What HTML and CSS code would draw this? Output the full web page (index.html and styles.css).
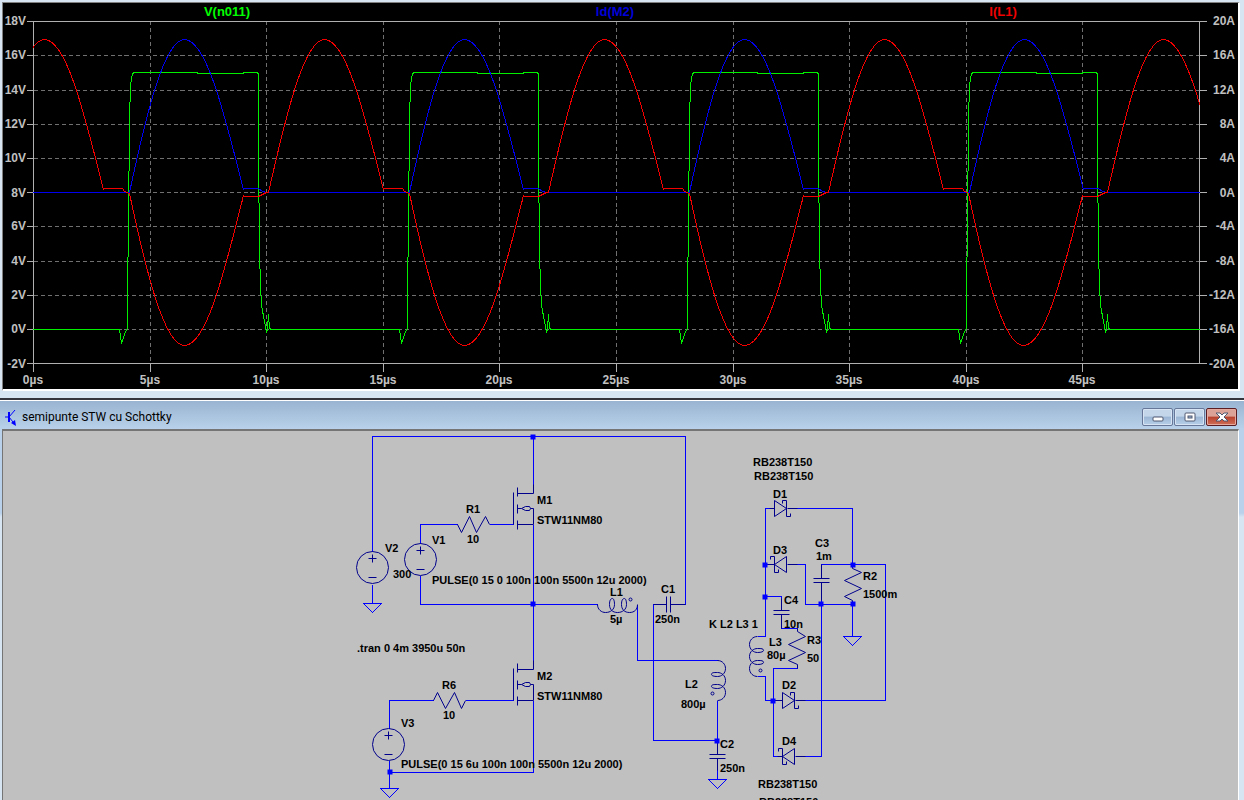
FILE: index.html
```html
<!DOCTYPE html>
<html lang="ro">
<head>
<meta charset="utf-8">
<title>semipunte STW cu Schottky</title>
<link rel="stylesheet" href="styles.css">
</head>
<body>
<section class="plot-window" aria-label="Waveforms">
<svg class="plot" viewBox="3 3 1235 386">
  <defs>
    <clipPath id="area"><rect x="33" y="20" width="1167" height="344"/></clipPath>
    <path id="volts" d="M-10 329H119L121 343L125 331L127 328V290L128 225L129 120L130 85L132 73L134 72H197V73H243V72H257L258 74V190L259 215V250L260 285L261 305L264 321L266 332L267 328L268 314L269 328L271 329H272"/>
    <path id="drain" d="M-12 192H129C146 112 164 39 184 39C206 39 224 114 243 189L244 188H258L262 191L266 192H268"/>
    <path id="coil" d="M129 193C146 273 164 345 184 345C206 345 224 271 243 195L244 196H258L262 194L266 192H268C286 112 304 39 324 39C346 39 364 114 383 189L384 188H399L402 188L404 191L409 193"/>
  </defs>
  <g class="grid" transform="translate(.5 .5)">
    <path d="M33 55H1199M33 90H1199M33 124H1199M33 158H1199M33 192H1199M33 226H1199M33 261H1199M33 295H1199M33 329H1199"/>
    <path d="M150 20V363M266 20V363M383 20V363M499 20V363M616 20V363M733 20V363M849 20V363M966 20V363M1082 20V363"/>
  </g>
  <g class="axes" transform="translate(.5 .5)">
    <path d="M26 21H1206M26 363H1206M33 21V371M1199 21V363"/>
    <path d="M26 55H33M26 90H33M26 124H33M26 158H33M26 192H33M26 226H33M26 261H33M26 295H33M26 329H33"/>
    <path d="M1199 55H1206M1199 90H1206M1199 124H1206M1199 158H1206M1199 192H1206M1199 226H1206M1199 261H1206M1199 295H1206M1199 329H1206"/>
    <path d="M150 363V371M266 363V371M383 363V371M499 363V371M616 363V371M733 363V371M849 363V371M966 363V371M1082 363V371"/>
  </g>
  <g clip-path="url(#area)">
    <g transform="translate(.5 .5)">
      <g class="trace green">
        <use href="#volts"/><use href="#volts" x="280"/><use href="#volts" x="560"/><use href="#volts" x="839"/><path d="M1111 329H1199"/>
      </g>
      <g class="trace blue">
        <use href="#drain"/><use href="#drain" x="280"/><use href="#drain" x="560"/><use href="#drain" x="840"/><path d="M1108 192H1199"/>
      </g>
      <g class="trace red">
        <use href="#coil" x="-280"/><use href="#coil"/><use href="#coil" x="280"/><use href="#coil" x="560"/><use href="#coil" x="839"/>
      </g>
    </g>
  </g>
  <g class="legend">
    <text class="green" x="227" y="16">V(n011)</text>
    <text class="blue" x="615" y="16">Id(M2)</text>
    <text class="red" x="1003" y="16">I(L1)</text>
  </g>
  <g class="ticks end">
    <text x="26" y="25">18V</text><text x="26" y="59">16V</text><text x="26" y="94">14V</text><text x="26" y="128">12V</text><text x="26" y="162">10V</text><text x="26" y="197">8V</text><text x="26" y="230">6V</text><text x="26" y="265">4V</text><text x="26" y="299">2V</text><text x="26" y="333">0V</text><text x="26" y="368">-2V</text>
    <text x="1235" y="25">20A</text><text x="1235" y="59">16A</text><text x="1235" y="94">12A</text><text x="1235" y="128">8A</text><text x="1235" y="162">4A</text><text x="1235" y="197">0A</text><text x="1235" y="230">-4A</text><text x="1235" y="265">-8A</text><text x="1235" y="299">-12A</text><text x="1235" y="333">-16A</text><text x="1235" y="368">-20A</text>
  </g>
  <g class="ticks middle">
    <text x="33" y="384">0µs</text><text x="150" y="384">5µs</text><text x="266" y="384">10µs</text><text x="383" y="384">15µs</text><text x="499" y="384">20µs</text><text x="616" y="384">25µs</text><text x="733" y="384">30µs</text><text x="849" y="384">35µs</text><text x="966" y="384">40µs</text><text x="1082" y="384">45µs</text>
  </g>
</svg>
</section>

<section class="schematic-window" aria-label="Schematic">
<header class="title-bar">
  <svg class="app-icon" width="12" height="17" viewBox="0 0 12 17"><path d="M1 8H5M5 8L11 1M5 8L9 13"/><path class="solid" d="M7 14L11 11L12 17Z"/><path class="bar" d="M5 3V13"/></svg>
  <h1>semipunte STW cu Schottky</h1>
  <div class="controls">
    <button type="button" aria-label="Minimize"><svg width="28" height="15" viewBox="0 0 28 15"><rect class="glyph" x="9" y="7" width="10" height="4" rx="1"/></svg></button>
    <button type="button" aria-label="Maximize"><svg width="28" height="15" viewBox="0 0 28 15"><rect class="glyph" x="9" y="3" width="10" height="8" rx="1"/><rect class="hole" x="12" y="6" width="4" height="2"/></svg></button>
    <button type="button" class="close" aria-label="Close"><svg width="28" height="15" viewBox="0 0 28 15"><path class="glyph" d="M8 3H12L14 5L16 3H20L16 7L20 11H16L14 9L12 11H8L12 7Z"/></svg></button>
  </div>
</header>
<div class="frame">
<div class="sheet">
<svg class="schematic" viewBox="3 431 1235 384">
  <defs>
    <g id="mosfet"><path d="M0 5V37M4 0V9M4 17V26M4 33V42M4 6H20M4 37H20M17 21H20V37M4 21H8L12 19H16L17 21L16 23H12L8 21"/></g>
    <g id="source"><circle r="16"/><path d="M-4 -9H4M0 -13V-5M-4 10H4"/></g>
    <path id="coilv" d="M0 0C5 0 8 4 8 8C8 13 4 16 0 16C-4 16 -6 15 -6 14C-6 12 -4 12 0 12C4 12 8 15 8 20C8 25 4 28 0 28C-4 28 -6 27 -6 26C-6 24 -4 24 0 24C4 24 8 27 8 32C8 37 4 40 0 40"/>
    <path id="schottky" d="M0 -8V8L12 0ZM8 -5V-8H12V8H16V5"/>
    <path id="schottky-left" d="M12 -8V8L0 0ZM-4 -5V-8H0V8H4V5"/>
    <path id="ground" d="M-9 0H9L0 9Z"/>
    <rect id="node" x="-2" y="-2" width="5" height="5"/>
  </defs>
  <g transform="translate(.5 .5)">
    <g class="wires">
      <path d="M372 551V436H685V604H677M533 436V488M420 543V524H457M489 524H513M420 575V604H597M372 584V603"/>
      <path d="M533 524V665M389 728V700H433M465 700H513M389 760V788M389 772H533V700"/>
      <path d="M637 604V660H717M717 700V748M717 740H653V604H662M717 764V779"/>
      <path d="M774 508H765V636H757M787 508H852V564M774 564H765M787 564H805V604H852M821 570V564H885V700H803M821 590V756H803M852 604V636"/>
      <path d="M765 596H781V604M781 622V628H797M797 668H773V756H778M757 676H765V700H778"/>
      <use href="#ground" x="372" y="603"/><use href="#ground" x="389" y="788"/><use href="#ground" x="717" y="779"/><use href="#ground" x="852" y="636"/>
    </g>
    <g class="parts">
      <use href="#mosfet" x="513" y="487"/><use href="#mosfet" x="513" y="663"/>
      <use href="#source" x="372" y="567"/><use href="#source" x="420" y="559"/><use href="#source" x="388" y="744"/>
      <path d="M533 484V493M533 660V669"/>
      <path d="M457 524L461 532L469 516L476 532L485 516L489 524M433 700L437 692L445 708L454 692L461 708L465 700"/>
      <path d="M597 604C597 609 601 612 605 612C610 612 614 609 614 604C614 600 613 598 612 598C610 598 609 600 609 604C609 609 612 612 617 612C622 612 626 609 626 604C626 600 625 598 624 598C622 598 621 600 621 604C621 609 624 612 629 612C634 612 637 609 637 604"/>
      <circle cx="630" cy="599" r="1.500"/>
      <use href="#coilv" x="717" y="660"/><circle cx="712" cy="693" r="1.500"/>
      <use href="#coilv" transform="translate(757 636) scale(-1 1)"/><circle cx="760" cy="670" r="1.500"/>
      <path d="M653 604H666M666 596V612M670 596V612M670 604H685"/>
      <path d="M717 740V754M709 754H725M709 758H725M717 758V770"/>
      <path d="M821 564V578M813 578H829M813 582H829M821 582V600"/>
      <path d="M781 598V610M773 610H789M773 614H789M781 614V628"/>
      <path d="M852 564V568L861 572L844 580L861 588L844 596L852 600V604"/>
      <path d="M797 628V631L805 636L788 644L805 652L788 660L797 664V668"/>
      <use href="#schottky" x="774" y="508"/><path d="M769 508H774M787 508H797"/>
      <use href="#schottky-left" x="774" y="564"/><path d="M767 564H774M787 564H797"/>
      <use href="#schottky" x="782" y="700"/><path d="M774 700H782M795 700H805"/>
      <use href="#schottky-left" x="782" y="756"/><path d="M777 756H782M795 756H805"/>
    </g>
    <g class="nodes">
      <use href="#node" x="532" y="436"/><use href="#node" x="532" y="603"/><use href="#node" x="389" y="771"/><use href="#node" x="716" y="740"/>
      <use href="#node" x="764" y="564"/><use href="#node" x="764" y="596"/><use href="#node" x="852" y="564"/><use href="#node" x="852" y="603"/><use href="#node" x="820" y="603"/><use href="#node" x="772" y="700"/>
    </g>
  </g>
  <g class="labels">
    <text x="385" y="552">V2</text><text x="393" y="578">300</text>
    <text x="432" y="544">V1</text><text x="432" y="584">PULSE(0 15 0 100n 100n 5500n 12u 2000)</text>
    <text x="466" y="513">R1</text><text x="467" y="543">10</text>
    <text x="537" y="504">M1</text><text x="537" y="524">STW11NM80</text>
    <text x="610" y="596">L1</text><text x="610" y="623">5µ</text>
    <text x="661" y="593">C1</text><text x="655" y="623">250n</text>
    <text x="357" y="652">.tran 0 4m 3950u 50n</text>
    <text x="442" y="689">R6</text><text x="443" y="719">10</text>
    <text x="537" y="680">M2</text><text x="537" y="700">STW11NM80</text>
    <text x="401" y="727">V3</text><text x="401" y="768">PULSE(0 15 6u 100n 100n 5500n 12u 2000)</text>
    <text x="685" y="688">L2</text><text x="681" y="708">800µ</text>
    <text x="720" y="748">C2</text><text x="720" y="772">250n</text>
    <text x="753" y="466">RB238T150</text><text x="754" y="480">RB238T150</text>
    <text x="773" y="498">D1</text><text x="773" y="554">D3</text>
    <text x="815" y="547">C3</text><text x="816" y="560">1m</text>
    <text x="863" y="580">R2</text><text x="863" y="598">1500m</text>
    <text x="784" y="604">C4</text><text x="784" y="628">10n</text>
    <text x="709" y="628">K L2 L3 1</text>
    <text x="769" y="646">L3</text><text x="767" y="659">80µ</text>
    <text x="807" y="644">R3</text><text x="807" y="662">50</text>
    <text x="782" y="689">D2</text><text x="782" y="745">D4</text>
    <text x="758" y="788">RB238T150</text><text x="759" y="806">RB238T150</text>
  </g>
</svg>
</div>
</div>
</section>
</body>
</html>
```
FILE: styles.css
```css
* { box-sizing: border-box; }

body {
  margin: 0;
  height: 100vh;
  overflow: hidden;
  display: flex;
  flex-direction: column;
  background: #d7e4f2;
  font-family: "Liberation Sans", Arial, sans-serif;
}

svg { display: block; }

.plot-window { padding: 2px 4px 7px 2px; background: #d7e4f2; }

.plot {
  box-sizing: content-box;
  width: calc(100% - 3px);
  height: auto;
  background: #000;
  border: 1px solid #808080;
  border-right: 2px solid #fff;
  border-bottom: 2px solid #fff;
}

.plot text { font-size: 12px; font-weight: bold; }
.plot .legend text { font-size: 13px; text-anchor: middle; }
.legend .green { fill: #00ff00; }
.legend .blue { fill: #0000d8; }
.legend .red { fill: #f00000; }
.ticks text { fill: #c0c0c0; }
.end text { text-anchor: end; }
.middle text { text-anchor: middle; }

.grid path {
  fill: none;
  stroke: #707070;
  stroke-dasharray: 4 3;
  shape-rendering: crispEdges;
}
.axes path { fill: none; stroke: #b0b0b0; shape-rendering: crispEdges; }

.trace { fill: none; shape-rendering: crispEdges; }
.trace.green { stroke: #00f000; }
.trace.blue { stroke: #0000f0; }
.trace.red { stroke: #f40000; }

.schematic-window {
  flex: 1;
  min-height: 0;
  display: flex;
  flex-direction: column;
  border-top: 2px solid #35353d;
  background: #b9d1ea;
}

.title-bar {
  flex: none;
  height: 29px;
  display: flex;
  align-items: center;
  gap: 6px;
  padding: 4px 7px 0 4px;
  border-top: 1px solid #fff;
  background: linear-gradient(#99b4d1, #b9d1ea);
}
.title-bar h1 {
  flex: 1;
  margin: 0;
  font: 12px/16px Roboto, "Open Sans", sans-serif;
  color: #000;
}
.app-icon path { fill: none; stroke: #0000ff; stroke-width: 1; }
.app-icon .bar { stroke-width: 2; }
.app-icon .solid { fill: #0000ff; stroke: none; }

.controls { display: flex; gap: 1px; }
.controls button {
  width: 31px;
  height: 18px;
  padding: 0;
  display: flex;
  justify-content: center;
  align-items: center;
  border: 1px solid #66779a;
  border-radius: 2px;
  background: linear-gradient(#c3d6ea 45%, #9bb6d5 50%, #b7cfe8);
  box-shadow: inset 0 0 0 1px #d6e4f3;
}
.controls .close {
  border-color: #5c1d22;
  background: linear-gradient(#dba398 45%, #b8412c 50%, #d0705a);
  box-shadow: inset 0 0 0 1px #e5a99e;
}
.glyph { fill: #fff; stroke: #505870; }
.hole { fill: #9bb6d5; stroke: #505870; }

.frame {
  flex: 1;
  min-height: 0;
  padding: 0 5px 0 2px;
  background: linear-gradient(#b9d1ea 60px, #b9d1ea 84px, #d7e4f2 88px);
}
.sheet {
  height: 100%;
  overflow: hidden;
  background: #c0c0c0;
  border-top: 2px solid #757575;
  border-left: 1px solid #757575;
  border-right: 1px solid #fff;
}
.schematic { width: 100%; height: auto; }
.wires { fill: none; stroke: #0000ff; shape-rendering: crispEdges; }
.parts { fill: none; stroke: #00008c; }
.nodes { fill: #0000ff; }
.labels text { font-size: 11px; font-weight: bold; fill: #000; }
```
